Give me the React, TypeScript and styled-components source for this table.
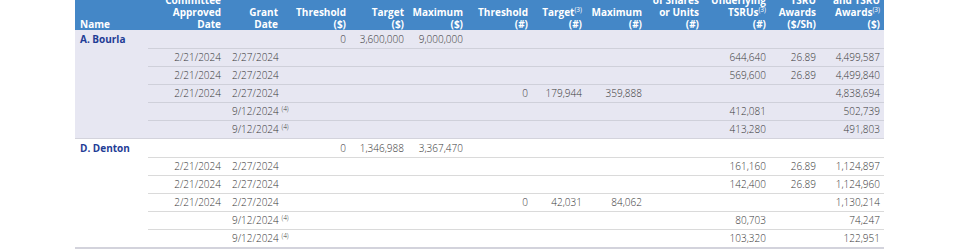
import React from "react";
import styled, { createGlobalStyle } from "styled-components";

const GlobalStyle = createGlobalStyle`
  html, body {
    margin: 0;
    padding: 0;
    background: #ffffff;
  }
`;

type Cell = string | { text: string; note: string };

interface Group {
  name: string;
  shade: boolean;
  rows: Cell[][];
}

const blank = (n: number): Cell[] => Array.from({ length: n }, () => "");

const groups: Group[] = [
  {
    name: "A. Bourla",
    shade: true,
    rows: [
      ["", "", "0", "3,600,000", "9,000,000", ...blank(7)],
      ["2/21/2024", "2/27/2024", ...blank(7), "644,640", "26.89", "4,499,587"],
      ["2/21/2024", "2/27/2024", ...blank(7), "569,600", "26.89", "4,499,840"],
      ["2/21/2024", "2/27/2024", "", "", "", "0", "179,944", "359,888", "", "", "", "4,838,694"],
      ["", { text: "9/12/2024", note: "(4)" }, ...blank(7), "412,081", "", "502,739"],
      ["", { text: "9/12/2024", note: "(4)" }, ...blank(7), "413,280", "", "491,803"],
    ],
  },
  {
    name: "D. Denton",
    shade: false,
    rows: [
      ["", "", "0", "1,346,988", "3,367,470", ...blank(7)],
      ["2/21/2024", "2/27/2024", ...blank(7), "161,160", "26.89", "1,124,897"],
      ["2/21/2024", "2/27/2024", ...blank(7), "142,400", "26.89", "1,124,960"],
      ["2/21/2024", "2/27/2024", "", "", "", "0", "42,031", "84,062", "", "", "", "1,130,214"],
      ["", { text: "9/12/2024", note: "(4)" }, ...blank(7), "80,703", "", "74,247"],
      ["", { text: "9/12/2024", note: "(4)" }, ...blank(7), "103,320", "", "122,951"],
    ],
  },
];

// widths of the 13 columns, name first
const widths = [73, 77, 57, 68, 58, 59, 65, 54, 60, 57, 67, 50, 64];

// the header is scrolled: its first line is half out of view
const headers = (): React.ReactNode[] => [
  "Name",
  <>Committee<br />Approved<br />Date</>,
  <>Grant<br />Date</>,
  <>Threshold<br />($)</>,
  <>Target<br />($)</>,
  <>Maximum<br />($)</>,
  <>Threshold<br />(#)</>,
  <>Target<Sup>(3)</Sup><br />(#)</>,
  <>Maximum<br />(#)</>,
  <>of Shares<br />or Units<br />(#)</>,
  <>Underlying<br />TSRUs<Sup>(3)</Sup><br />(#)</>,
  <>TSRU<br />Awards<br />($/Sh)</>,
  <>and TSRU<br />Awards<Sup>(3)</Sup><br />($)</>,
];

function App() {
  return (
    <>
      <GlobalStyle />
      <Table>
        <colgroup>
          {widths.map((w, i) => (
            <col key={i} style={{ width: w }} />
          ))}
        </colgroup>
        <thead>
          <tr>
            {headers().map((h, i) => (
              <HeadCell key={i} $left={i === 0}>
                {h}
              </HeadCell>
            ))}
          </tr>
        </thead>
        {groups.map((g) => (
          <Body key={g.name} $shade={g.shade}>
            {g.rows.map((row, r) => {
              const last = r === g.rows.length - 1;
              return (
                <tr key={r}>
                  {r === 0 && (
                    <NameCell rowSpan={g.rows.length} $end={g.shade ? 1 : 2}>
                      {g.name}
                    </NameCell>
                  )}
                  {row.map((c, i) => (
                    <DataCell
                      key={i}
                      $sep={r > 0}
                      $shade={g.shade}
                      $end={last ? (g.shade ? 1 : 2) : 0}
                      $left={i === 1}
                    >
                      {typeof c === "string" ? (
                        c
                      ) : (
                        <>
                          {c.text} <Note>{c.note}</Note>
                        </>
                      )}
                    </DataCell>
                  ))}
                </tr>
              );
            })}
          </Body>
        ))}
      </Table>
    </>
  );
}

const Table = styled.table`
  table-layout: fixed;
  width: 809px;
  border-collapse: separate;
  border-spacing: 0;
  margin: -9px 0 0 75px;
  font-family: "Open Sans", "Noto Sans", sans-serif;
  font-size: 10px;
`;

const HeadCell = styled.th<{ $left: boolean }>`
  background: #4487c7;
  color: #ffffff;
  font-weight: 700;
  line-height: 12px;
  vertical-align: bottom;
  text-align: ${(p) => (p.$left ? "left" : "right")};
  padding: 3px 4px 0 ${(p) => (p.$left ? "5px" : "2px")};
  white-space: nowrap;
`;

const Sup = styled.sup`
  font-size: 6.5px;
  font-weight: 400;
  vertical-align: 4px;
  line-height: 0;
`;

const Body = styled.tbody<{ $shade: boolean }>`
  background: ${(p) => (p.$shade ? "#e7e7f2" : "#ffffff")};
`;

const NameCell = styled.td<{ $end: number }>`
  vertical-align: top;
  padding: 0 0 0 5px;
  line-height: 18px;
  color: #1f3d96;
  font-weight: 700;
  border-bottom: ${(p) => p.$end}px solid #d3d3dc;
  white-space: nowrap;
`;

const DataCell = styled.td<{
  $sep: boolean;
  $shade: boolean;
  $end: number;
  $left: boolean;
}>`
  height: 17px;
  padding: 0 ${(p) => (p.$left ? "0" : "4px")} 0 ${(p) => (p.$left ? "7px" : "0")};
  line-height: 17px;
  color: #383838;
  font-weight: 300;
  text-align: ${(p) => (p.$left ? "left" : "right")};
  white-space: nowrap;
  border-top: 1px solid
    ${(p) => (p.$sep ? (p.$shade ? "#cfd0da" : "#dadada") : "transparent")};
  border-bottom: ${(p) => (p.$end ? `${p.$end}px solid #d3d3dc` : "none")};
`;

const Note = styled.sup`
  font-size: 6.5px;
  vertical-align: 4px;
  line-height: 0;
`;

export default App;
